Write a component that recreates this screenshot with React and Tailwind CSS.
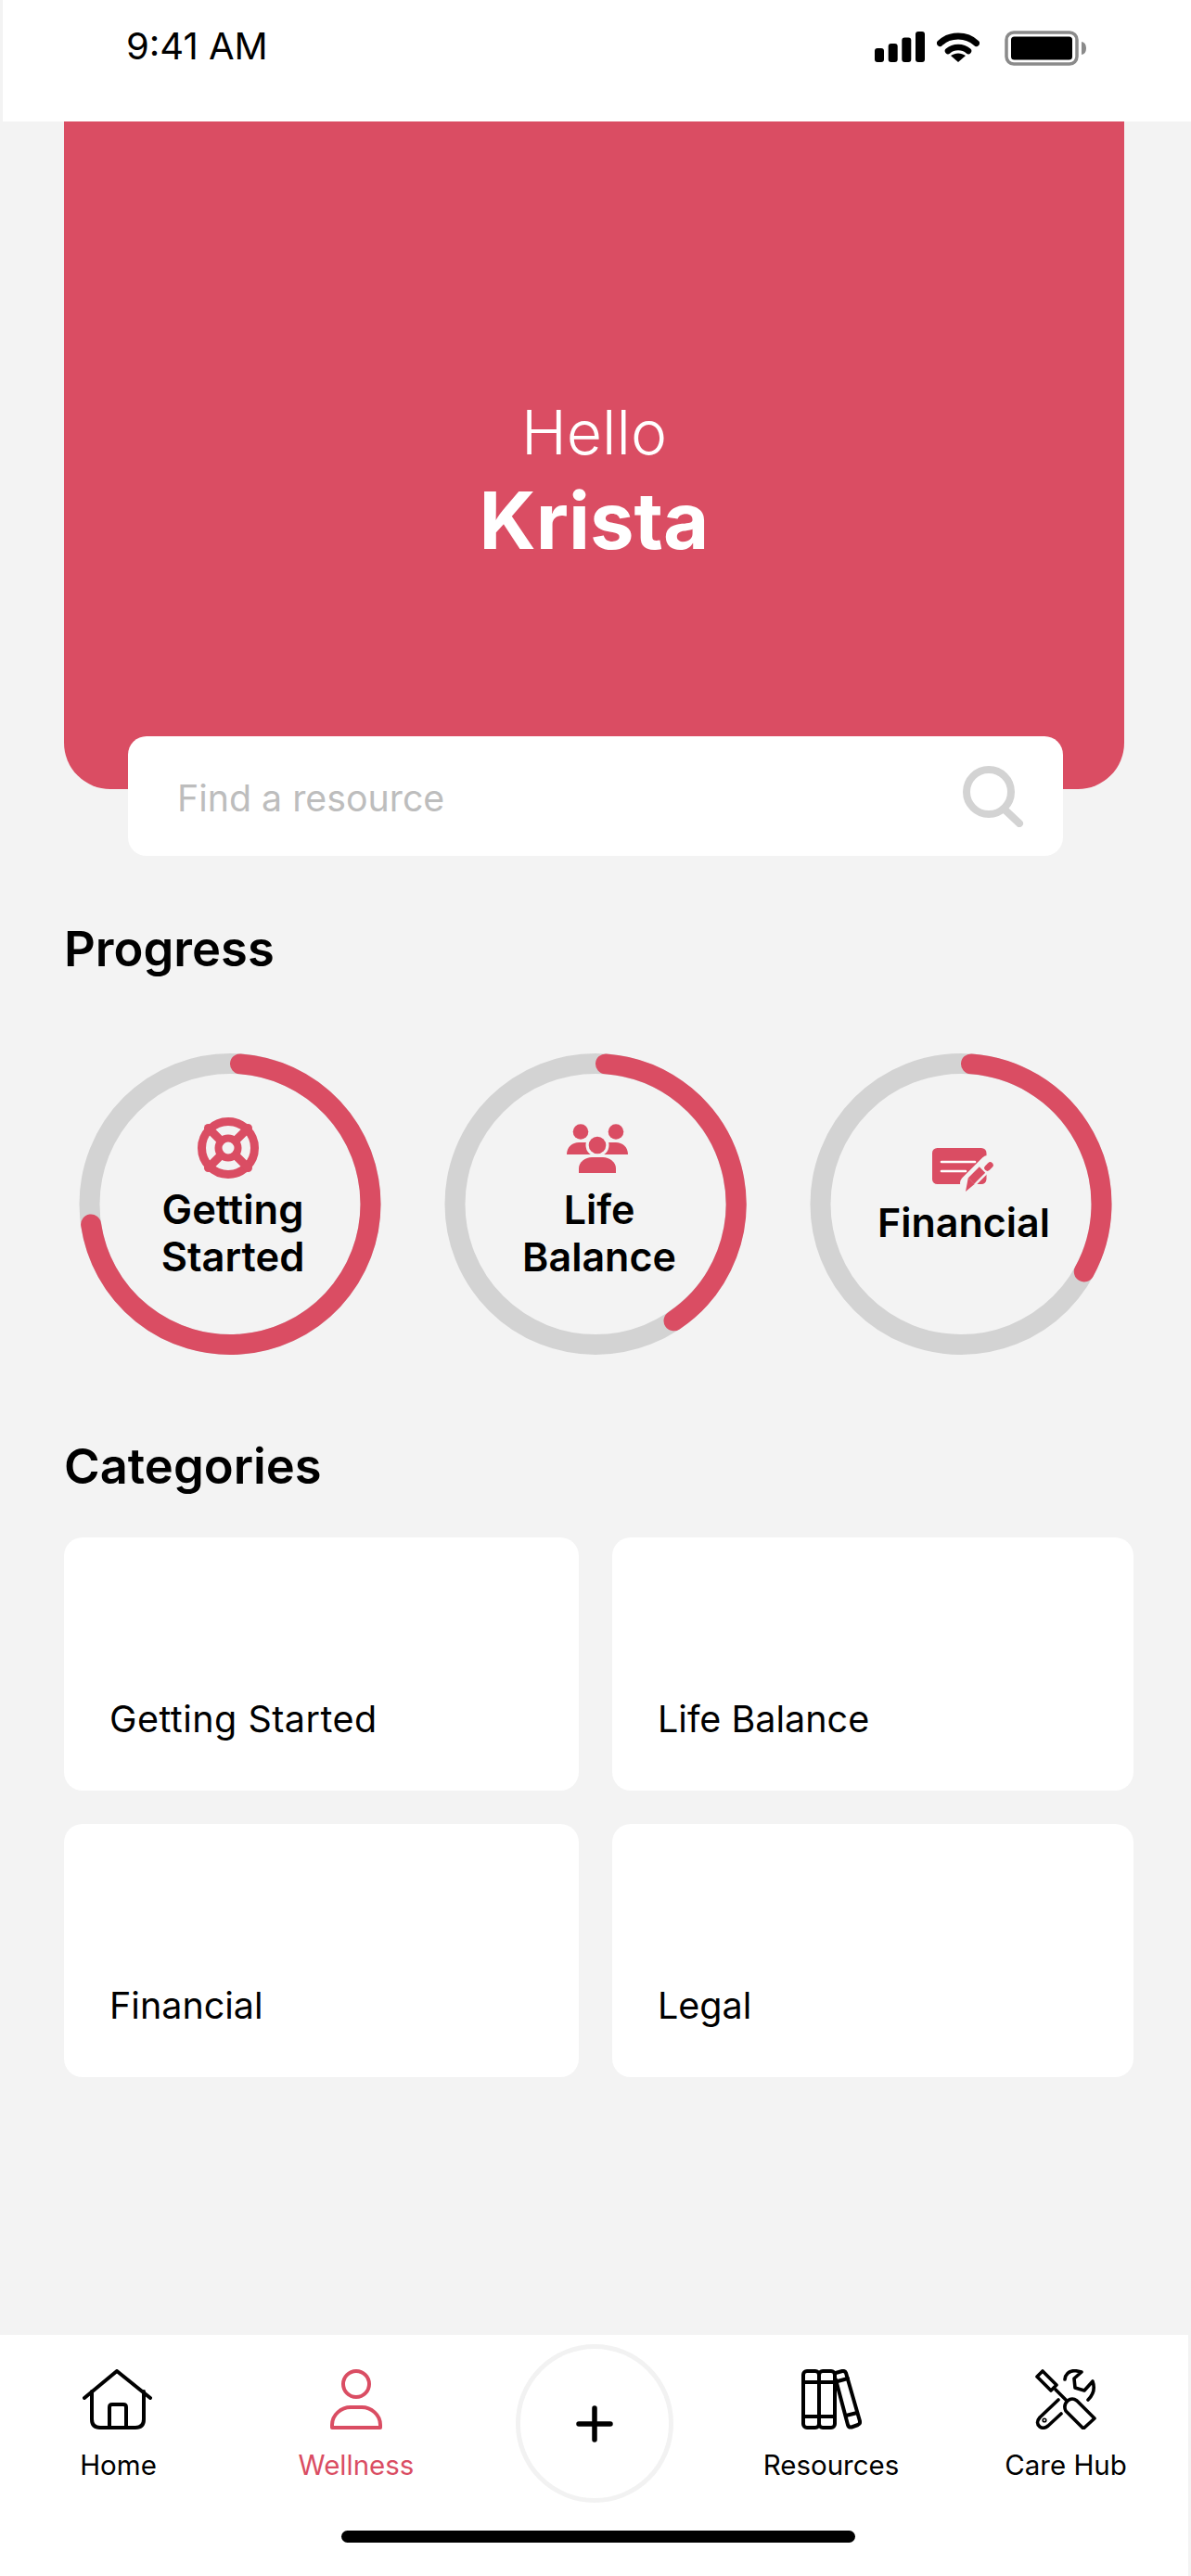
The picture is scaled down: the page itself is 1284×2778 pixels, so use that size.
const RED = "#da4d63";
const BG = "#f3f3f3";

function Lifebuoy() {
  return (
    <svg width="66" height="66" viewBox="0 0 66 66" fill="none" stroke={RED} className="shrink-0">
      <circle cx="33" cy="33" r="28.5" strokeWidth="9" />
      <circle cx="33" cy="33" r="10.5" strokeWidth="8" />
      <g strokeWidth="9" strokeLinecap="round">
        <path d="M24 24 L11.5 11.5" />
        <path d="M42 24 L54.5 11.5" />
        <path d="M24 42 L11.5 54.5" />
        <path d="M42 42 L54.5 54.5" />
      </g>
    </svg>
  );
}

function People() {
  return (
    <svg width="66" height="53" viewBox="0 0 66 53" fill={RED} className="shrink-0">
      <circle cx="15" cy="8.5" r="8.3" />
      <circle cx="53" cy="8.5" r="8.3" />
      <path d="M0 33 C0 25 6 20 13 20 H53 C60 20 66 25 66 33 Z" />
      <circle cx="33" cy="23" r="12.5" fill={BG} />
      <rect x="0" y="33" width="66" height="3" fill={BG} />
      <circle cx="33" cy="23" r="9.3" />
      <path d="M13 53 V48 C13 41 20 36 27 36 H39 C46 36 53 41 53 48 V53 Z" />
    </svg>
  );
}

function CardPen() {
  return (
    <svg width="66" height="47" viewBox="0 0 66 47" fill="none" className="shrink-0">
      <rect x="0" y="0" width="58.5" height="39" rx="5.5" fill={RED} />
      <path d="M10 15 H46" stroke="#fff" strokeWidth="2.6" strokeLinecap="round" />
      <path d="M10 25 H36" stroke="#fff" strokeWidth="2.6" strokeLinecap="round" />
      <path d="M38 38 L60 16" stroke={BG} strokeWidth="16" strokeLinecap="round" />
      <path d="M42 35.5 L54 23.5" stroke={RED} strokeWidth="9" />
      <path d="M38.8 32.2 L45.6 39 L36 47 Z" fill={RED} />
      <path d="M59.5 21.5 L62.5 18.5" stroke={RED} strokeWidth="6.5" strokeLinecap="round" />
    </svg>
  );
}

function Ring({ endX, endY, large, icon, lines }) {
  return (
    <div className="relative w-[324px] h-[325px] shrink-0 flex flex-col items-center">
      <svg className="absolute inset-0 overflow-visible" width="324" height="325" viewBox="0 0 324 325" fill="none">
        <circle cx="162" cy="162.5" r="151.5" stroke="#d3d3d3" strokeWidth="22" />
        <path
          d={`M173 11.4 A151.5 151.5 0 ${large} 1 ${endX} ${endY}`}
          stroke={RED}
          strokeWidth="22"
          strokeLinecap="round"
        />
      </svg>
      {icon}
      {lines}
    </div>
  );
}

function HomeIcon() {
  return (
    <svg width="75" height="65" viewBox="0 0 75 65" fill="none" stroke="#000" strokeWidth="4" strokeLinecap="round" strokeLinejoin="round">
      <path d="M2 31 L37 2 L73 31" />
      <path d="M10 24 V54 Q10 63 19 63 H57 Q66 63 66 54 V24" />
      <path d="M29 63 V41 Q29 38 32 38 H44 Q47 38 47 41 V63" />
    </svg>
  );
}

function PersonIcon() {
  return (
    <svg width="56" height="65" viewBox="0 0 56 65" fill="none" stroke={RED} strokeWidth="4" strokeLinejoin="round">
      <circle cx="28" cy="16" r="14" />
      <path d="M2 63 V60 C2 49 12 41 22 41 H34 C44 41 54 49 54 60 V63 Z" />
    </svg>
  );
}

function BooksIcon() {
  return (
    <svg width="65" height="65" viewBox="0 0 65 65" fill="none" stroke="#000" strokeWidth="4" strokeLinecap="round" strokeLinejoin="round">
      <rect x="2" y="2" width="17" height="61" rx="4" />
      <rect x="19" y="2" width="17" height="61" rx="4" />
      <path d="M2 14 H36 M2 51 H36" />
      <path d="M37 4 L44 2 Q47 1.500 48 4 L63 56 Q63.500 59 61 60 L54 62.500 Q51 63 50 60 L37 11" />
      <path d="M39 13 L50 10 M48 50 L60 47" />
    </svg>
  );
}

function ToolsIcon() {
  return (
    <svg width="66" height="65" viewBox="0 0 66 65" fill="none" stroke="#000" strokeWidth="3.6" strokeLinecap="round" strokeLinejoin="round">
      <path d="M8 2 L23 17 L17 23 L2 8 Z" />
      <path d="M22 22 L33 33" />
      <path d="M35 34 Q40 30 45 34 L64 53 L52 64 L33 45 Q30 39 35 34 Z" />
      <path d="M25 33 L5 52 Q0 58 5 62 Q9 65 14 61 L28 48" />
      <circle cx="10" cy="55" r="0.8" />
      <path d="M32 11 Q33 2 43 1.500 L50 3 L42 10 L43 20 L53 23 L62 13 Q66 24 57 33" />
    </svg>
  );
}

function NavItem({ width, icon, label, active, textClass }) {
  return (
    <div className={`${width} flex flex-col items-center pt-[37px] shrink-0`}>
      <div className="h-[65px] flex items-start justify-center">{icon}</div>
      <span className={`mt-[23px] text-[29.5px] leading-[30px] whitespace-nowrap ${textClass || ""} ${active ? "text-[#da4d63]" : "text-black"}`}>{label}</span>
    </div>
  );
}

function Card({ label, tracking }) {
  return (
    <div className="h-[273px] bg-white rounded-[20px] pl-[49px] pt-[172px]">
      <span className={`block text-[39.5px] leading-[48px] text-black ${tracking || ""}`}>{label}</span>
    </div>
  );
}

export default function App() {
  return (
    <div className="w-[1284px] h-[2778px] bg-[#f3f3f3] flex flex-col font-['Inter',sans-serif] overflow-hidden">
      {/* Status bar */}
      <div className="ml-[3px] h-[131px] bg-white flex items-start justify-between shrink-0">
        <span className="ml-[133px] mt-[27px] text-[40px] leading-[46px] text-black">9:41 AM</span>
        <div className="mr-[113px] mt-[33px] flex items-start">
          <svg width="54" height="34" viewBox="0 0 54 34" fill="#000" className="mt-px">
            <rect x="0" y="18" width="10" height="15" rx="3" />
            <rect x="14.700" y="13" width="10" height="20" rx="3" />
            <rect x="29.300" y="6.500" width="10" height="26.500" rx="3" />
            <rect x="44" y="0" width="10" height="33" rx="3" />
          </svg>
          <svg width="46" height="34" viewBox="0 0 46 34" fill="none" className="ml-[13px] mt-px">
            <path d="M3.500 12.500 C14 2.500 32 2.500 42.500 12.500" stroke="#000" strokeWidth="7" strokeLinecap="round" />
            <path d="M12 21 C18 15.500 28 15.500 34 21" stroke="#000" strokeWidth="6.500" strokeLinecap="round" />
            <path d="M23 33 L15 26 C20 22.500 26 22.500 31 26 Z" fill="#000" />
          </svg>
          <svg width="88" height="38" viewBox="0 0 88 38" fill="none" className="ml-[27px]">
            <rect x="2" y="2" width="76" height="34" rx="8" stroke="#8a8a8a" strokeWidth="3.500" />
            <rect x="7" y="6.500" width="66" height="25" rx="3.500" fill="#000" />
            <path d="M83 12 Q88 13 88 19 Q88 25 83 26 Z" fill="#8a8a8a" />
          </svg>
        </div>
      </div>

      {/* Hero */}
      <div className="mx-[69px] w-[1143px] h-[720px] shrink-0 bg-[#da4d63] rounded-b-[50px] flex flex-col items-center pt-[303px] text-white">
        <span className="text-[66px] leading-[64px] font-light">Hello</span>
        <span className="mt-[22px] text-[85px] leading-[84px] font-bold">Krista</span>
      </div>

      {/* Search */}
      <div className="ml-[138px] w-[1008px] h-[129px] mt-[-57px] shrink-0 bg-white rounded-[20px] flex items-center justify-between pl-[53px] pr-[42px]">
        <span className="text-[39.3px] leading-[48px] text-[#bdbdbd] mt-[4px]">Find a resource</span>
        <svg width="66" height="66" viewBox="0 0 66 66" fill="none" stroke="#d3d3d3" strokeWidth="8" strokeLinecap="round">
          <circle cx="28" cy="28" r="24" />
          <path d="M44 46 L61 62" strokeWidth="8" />
        </svg>
      </div>

      <h2 className="ml-[69px] mt-[75px] text-[52.5px] leading-[50px] font-semibold text-black">Progress</h2>

      {/* Rings */}
      <div className="mt-[88px] pl-[86px] flex gap-[70px] shrink-0">
        <Ring
          endX="12.100"
          endY="184.500"
          large="1"
          icon={<div className="relative mt-[69px] mr-[4px]"><Lifebuoy /></div>}
          lines={<div className="relative mt-[8px] ml-[6px] text-center text-[43.5px] leading-[51px] font-semibold text-black">Getting<br />Started</div>}
        />
        <Ring
          endX="246.500"
          endY="288.300"
          large="0"
          icon={<div className="relative mt-[76px] ml-[4px]"><People /></div>}
          lines={<div className="relative mt-[14px] ml-[8px] text-center text-[43px] leading-[51px] font-semibold text-black">Life<br />Balance</div>}
        />
        <Ring
          endX="294.800"
          endY="235.400"
          large="0"
          icon={<div className="relative mt-[102px] ml-[4px]"><CardPen /></div>}
          lines={<div className="relative mt-[8px] ml-[6px] text-center text-[43px] leading-[51px] font-semibold text-black">Financial</div>}
        />
      </div>

      <h2 className="ml-[69px] mt-[95px] text-[52.5px] leading-[50px] font-semibold text-black">Categories</h2>

      {/* Categories */}
      <div className="ml-[69px] mt-[52px] grid grid-cols-[555px_562px] gap-x-[36px] gap-y-[36px]">
        <Card label="Getting Started" tracking="tracking-[0.47px]" />
        <Card label="Life Balance" />
        <Card label="Financial" />
        <Card label="Legal" />
      </div>

      {/* Bottom nav */}
      <div className="mt-auto w-[1281px] h-[260px] bg-white shrink-0 flex flex-col">
        <div className="flex items-start h-[181px]">
          <NavItem width="w-[252px]" icon={<HomeIcon />} label="Home" textClass="ml-[3px]" />
          <NavItem width="w-[264px]" icon={<PersonIcon />} label="Wellness" active />
          <div className="w-[250px] shrink-0 flex justify-center pt-[10px]">
            <div className="w-[170px] h-[171px] rounded-full border-[5px] border-[#f2f2f2] flex items-center justify-center">
              <svg width="40" height="40" viewBox="0 0 40 40" fill="none" stroke="#000" strokeWidth="5.500" strokeLinecap="round">
                <path d="M20 3 V37 M3 20 H37" />
              </svg>
            </div>
          </div>
          <NavItem width="w-[260px]" icon={<BooksIcon />} label="Resources" />
          <NavItem width="w-[246px]" icon={<ToolsIcon />} label="Care Hub" />
        </div>
        <div className="ml-[368px] mt-[30px] w-[554px] h-[13px] bg-black rounded-full" />
      </div>
    </div>
  );
}
